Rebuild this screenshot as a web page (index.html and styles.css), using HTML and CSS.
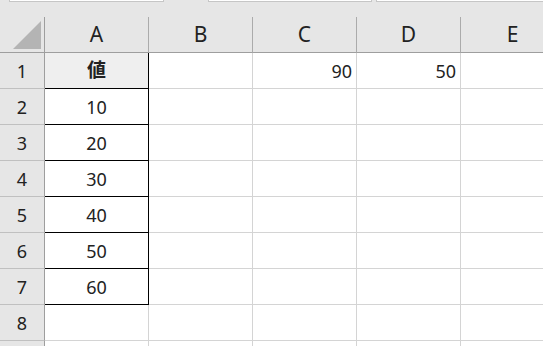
FILE: index.html
```html
<!DOCTYPE html>
<html lang="ja">
<head>
<meta charset="utf-8">
<link rel="stylesheet" href="styles.css">
</head>
<body>
<div class="app">
  <div class="toolbar">
    <div class="box box1"></div>
    <div class="box box2"></div>
    <div class="box box3"></div>
  </div>
  <div class="sheet">
    <div class="corner"><svg width="28" height="28" viewBox="0 0 28 28"><polygon points="28,0 28,28 0,28" fill="#b4b4b4"/></svg></div>
    <div class="colh">A</div>
    <div class="colh">B</div>
    <div class="colh">C</div>
    <div class="colh">D</div>
    <div class="colh">E</div>

    <div class="rowh">1</div>
    <div class="cell tbl head">値</div>
    <div class="cell"></div>
    <div class="cell num">90</div>
    <div class="cell num">50</div>
    <div class="cell"></div>

    <div class="rowh">2</div>
    <div class="cell tbl">10</div>
    <div class="cell"></div><div class="cell"></div><div class="cell"></div><div class="cell"></div>

    <div class="rowh">3</div>
    <div class="cell tbl">20</div>
    <div class="cell"></div><div class="cell"></div><div class="cell"></div><div class="cell"></div>

    <div class="rowh">4</div>
    <div class="cell tbl">30</div>
    <div class="cell"></div><div class="cell"></div><div class="cell"></div><div class="cell"></div>

    <div class="rowh">5</div>
    <div class="cell tbl">40</div>
    <div class="cell"></div><div class="cell"></div><div class="cell"></div><div class="cell"></div>

    <div class="rowh">6</div>
    <div class="cell tbl">50</div>
    <div class="cell"></div><div class="cell"></div><div class="cell"></div><div class="cell"></div>

    <div class="rowh">7</div>
    <div class="cell tbl">60</div>
    <div class="cell"></div><div class="cell"></div><div class="cell"></div><div class="cell"></div>

    <div class="rowh">8</div>
    <div class="cell"></div>
    <div class="cell"></div><div class="cell"></div><div class="cell"></div><div class="cell"></div>

    <div class="rowh"></div>
    <div class="cell"></div>
    <div class="cell"></div><div class="cell"></div><div class="cell"></div><div class="cell"></div>
  </div>
</div>
</body>
</html>
```
FILE: styles.css
```css
html, body {
  margin: 0;
  padding: 0;
  background: #ffffff;
  overflow: hidden;
}
.app {
  width: 543px;
  height: 346px;
  overflow: hidden;
  font-family: "Noto Sans", "Noto Sans CJK JP", sans-serif;
  color: #222222;
}
.toolbar {
  height: 17px;
  background: #e6e6e6;
  display: flex;
  align-items: flex-start;
}
.box {
  height: 1px;
  background: #ffffff;
  border: 1px solid #c6c6c6;
  border-top: none;
  flex: none;
}
.box1 { margin-left: 9px; width: 153px; }
.box2 { margin-left: 44px; width: 162px; }
.box3 { margin-left: 4px; width: 200px; }
.sheet {
  display: grid;
  grid-template-columns: 45px repeat(5, 104px);
  grid-auto-rows: 36px;
}
.corner {
  background: #e6e6e6;
  border-right: 1px solid #9e9e9e;
  border-bottom: 1px solid #9e9e9e;
  display: flex;
  justify-content: flex-end;
  align-items: flex-end;
  padding: 0 3px 3px 0;
  box-sizing: border-box;
}
.corner svg { display: block; }
.colh {
  background: #e6e6e6;
  border-right: 1px solid #ababab;
  border-bottom: 1px solid #9e9e9e;
  display: flex;
  align-items: center;
  justify-content: center;
  font-size: 21px;
  line-height: 1;
}
.rowh {
  background: #e6e6e6;
  border-right: 1px solid #9e9e9e;
  border-bottom: 1px solid #c0c0c0;
  display: flex;
  align-items: center;
  justify-content: center;
  font-size: 18px;
  line-height: 1;
}
.cell {
  background: #ffffff;
  border-right: 1px solid #d4d4d4;
  border-bottom: 1px solid #d4d4d4;
  display: flex;
  align-items: center;
  font-size: 18px;
  line-height: 1;
}
.cell.tbl {
  justify-content: center;
  border-right-color: #000000;
  border-bottom-color: #000000;
}
.cell.head {
  background: #efefef;
  font-weight: bold;
  font-size: 19px;
}
.cell.num {
  justify-content: flex-end;
  padding-right: 4px;
}
```
